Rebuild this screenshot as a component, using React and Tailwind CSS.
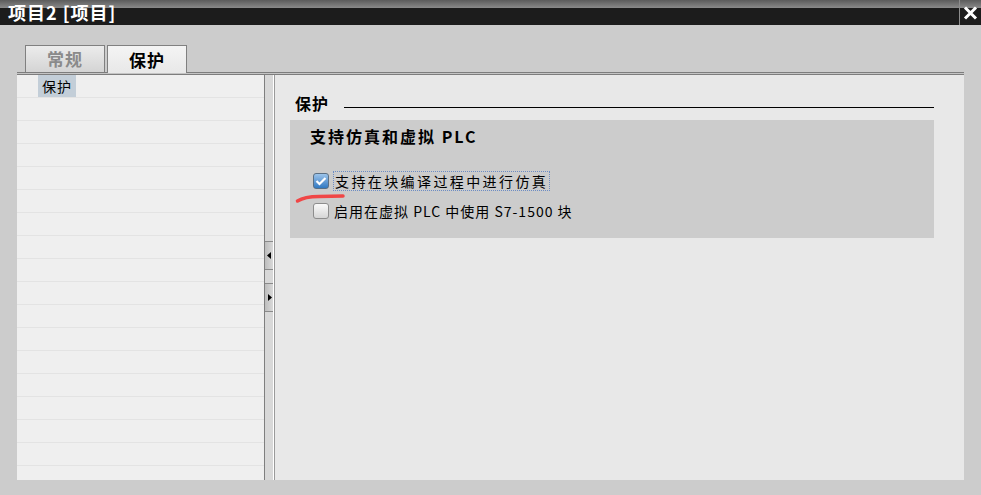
import React from "react";

const cjk = "font-['Noto_Sans_CJK_SC',sans-serif]";

function Checkbox({ checked }) {
    return (
        <div
            className={
                "w-4 h-4 rounded-[3px] border flex items-center justify-center " +
                (checked
                    ? "border-[#5a6f84] bg-gradient-to-b from-[#9cc4ea] to-[#2f79c2]"
                    : "border-[#8d8d8d] bg-gradient-to-b from-[#fafafa] to-[#d6d6d6]")
            }
        >
            {checked && (
                <svg width="12" height="10" viewBox="0 0 12 10">
                    <path d="M1.5 5 L4.5 8 L10.5 2" fill="none" stroke="#ffffff" strokeWidth="2.2" />
                </svg>
            )}
        </div>
    );
}

function SplitButton({ dir }) {
    return (
        <div className="h-[29px] border-y border-[#8a8a8a] bg-gradient-to-r from-[#bdbdbd] to-[#d9d9d9] flex items-center justify-center">
            <svg width="5" height="7" viewBox="0 0 5 7">
                {dir === "left" ? (
                    <path d="M0 3.5 L4 0 L4 7 Z" fill="#000" />
                ) : (
                    <path d="M5 3.5 L1 0 L1 7 Z" fill="#000" />
                )}
            </svg>
        </div>
    );
}

export default function App() {
    const rows = Array.from({ length: 17 });

    return (
        <div className={"w-[981px] h-[495px] bg-[#cccccc] flex flex-col overflow-hidden " + cjk}>
            {/* title bar */}
            <div className="h-[25px] flex shrink-0">
                <div className="flex-1 flex flex-col">
                    <div className="h-[8px] bg-gradient-to-b from-[#5c5c5c] to-[#8a8a8a]" />
                    <div className="flex-1 bg-[#1c1c1c]" />
                </div>
                <div className="absolute left-[8px] top-[0px] text-white font-bold text-[18px] leading-[24px] tracking-[1px]">
                    项目2 [项目]
                </div>
                <div className="w-px bg-[#8d8d8d]" />
                <div className="w-[21px] flex flex-col">
                    <div className="h-[8px] bg-gradient-to-b from-[#5c5c5c] to-[#8a8a8a]" />
                    <div className="flex-1 bg-[#1c1c1c]" />
                </div>
                <svg className="absolute left-[963px] top-[6px]" width="15" height="14" viewBox="0 0 15 14">
                    <path d="M2 1.5 L13 12.5 M13 1.5 L2 12.5" stroke="#ffffff" strokeWidth="3" />
                </svg>
            </div>

            {/* body */}
            <div className="flex-1 flex flex-col pt-[20px] pl-[17px] pr-[17px] pb-[15px]">
                {/* tabs */}
                <div className="flex h-[27px] pl-[8px] gap-[2px] relative z-10">
                    <div className="w-[80px] h-[27px] border border-b-0 border-[#808080] bg-gradient-to-b from-[#ececec] to-[#d4d4d4] flex items-center justify-center text-[17px] font-bold text-[#8a8a8a] tracking-[1px]">
                        常规
                    </div>
                    <div className="w-[80px] h-[28px] border border-b-0 border-[#808080] bg-gradient-to-b from-[#f4f4f4] to-[#e8e8e8] flex items-center justify-center text-[17px] font-bold text-black tracking-[1px]">
                        保护
                    </div>
                </div>

                {/* panel */}
                <div className="flex-1 flex flex-col">
                    <div className="h-[3px] border-y border-[#7d7d7d] bg-[#c4c4c4]" />
                    <div className="flex-1 flex">
                        {/* left tree */}
                        <div className="w-[247px] bg-[#efefef] flex flex-col">
                            {rows.map((_, i) => (
                                <div key={i} className="h-[23px] shrink-0 border-b border-[#e3e3e3] flex items-center pl-[21px]">
                                    {i === 0 && (
                                        <span className="bg-[#c3ced8] px-[4px] h-[22px] flex items-center text-[14px] text-black tracking-[1px]">
                                            保护
                                        </span>
                                    )}
                                </div>
                            ))}
                        </div>

                        {/* splitter */}
                        <div className="w-[11px] flex">
                            <div className="w-px bg-[#7f7f7f]" />
                            <div className="w-[8px] bg-[#d8d8d8] flex flex-col pt-[166px] gap-[13px]">
                                <SplitButton dir="left" />
                                <SplitButton dir="right" />
                            </div>
                            <div className="w-px bg-white" />
                            <div className="w-px bg-[#9a9a9a]" />
                        </div>

                        {/* right content */}
                        <div className="flex-1 bg-[#e8e8e8] pl-[15px] pr-[30px] pt-[14px] relative">
                            <div className="flex items-end gap-[15px] h-[24px]">
                                <span className="pl-[5px] text-[16px] font-bold text-black leading-[20px] tracking-[1px]">保护</span>
                                <div className="flex-1 h-px bg-black mb-[5px]" />
                            </div>
                            <div className="mt-[7px] h-[118px] bg-[#cccccc] pl-[20px] pt-[5px]">
                                <div className="text-[16px] font-bold text-black leading-[22px] tracking-[2px]">
                                    支持仿真和虚拟 PLC
                                </div>
                                <div className="mt-[24px] flex items-center h-[20px] pl-[3px] gap-[4px]">
                                    <Checkbox checked />
                                    <span className="border border-dotted border-[#6c8cc4] px-[1px] text-[14px] leading-[18px] text-black tracking-[2.4px]">
                                        支持在块编译过程中进行仿真
                                    </span>
                                </div>
                                <div className="mt-[10px] flex items-center h-[20px] pl-[3px] gap-[5px]">
                                    <Checkbox />
                                    <span className="text-[14px] leading-[18px] text-black tracking-[1px]">
                                        启用在虚拟 PLC 中使用 S7-1500 块
                                    </span>
                                </div>
                            </div>
                            {/* red annotation stroke */}
                            <svg className="absolute left-[20px] top-[118px]" width="52" height="11" viewBox="0 0 52 11">
                                <path d="M2.5 8 C8 4.5 14 3.5 24 3.5 L48 3" fill="none" stroke="#f04646" strokeWidth="3.5" strokeLinecap="round" />
                            </svg>
                        </div>
                    </div>
                </div>
            </div>
        </div>
    );
}
